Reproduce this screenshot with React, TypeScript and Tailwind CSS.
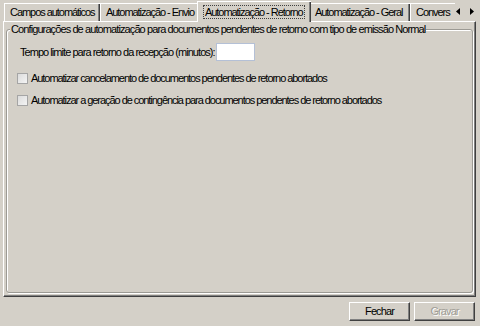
import React from "react";

function Tab({ label, selected, w }: { label: string; selected?: boolean; w: string }) {
  if (selected) {
    return (
      <div className={`relative z-10 -mx-[2px] -mb-px h-[21px] ${w} shrink-0 border-l border-t border-white shadow-[inset_-1px_0_0_#404040,inset_-2px_0_0_#808080] bg-[#d4d0c8] flex items-start pl-[5px] pt-[3px] whitespace-nowrap`}>
        <span className="border border-dotted border-[#404040] px-px h-[14px] leading-[12px]">{label}</span>
      </div>
    );
  }
  return (
    <div className={`h-[18px] ${w} shrink-0 border-l border-t border-white shadow-[inset_-1px_0_0_#404040,inset_-2px_0_0_#808080] flex items-start pl-[5px] pt-[2px] leading-[13px] overflow-hidden whitespace-nowrap`}>
      {label}
    </div>
  );
}

function Check({ label }: { label: string }) {
  return (
    <div className="flex items-center gap-[3px] h-[13px]">
      <div className="w-[11px] h-[11px] border border-[#a5a5a5] bg-gradient-to-br from-[#dcdcdc] to-[#f4f4f4]" />
      <span className="leading-[13px] tracking-[-1.05px]">{label}</span>
    </div>
  );
}

export default function App() {
  return (
    <div className="w-[480px] h-[326px] bg-[#d4d0c8] text-[11px] leading-[13px] tracking-[-1.05px] text-black font-['Liberation_Sans',Arial,sans-serif] overflow-hidden flex flex-col">
      <div className="relative h-[21px] flex items-end pl-[4px]">
        <Tab label="Campos automáticos" w="w-[96px]" />
        <Tab label="Automatização - Envio" w="w-[99px]" />
        <Tab label="Automatização - Retorno" selected w="w-[114px]" />
        <Tab label="Automatização - Geral" w="w-[101px]" />
        <div className="h-[18px] w-[45px] shrink-0 border-l border-t border-white flex items-start pl-[5px] pt-[2px] overflow-hidden whitespace-nowrap">
          Convers
        </div>
        <div className="h-[18px] flex items-center gap-[8px] pl-[1px] pb-[2px]">
          <svg width="5" height="7" viewBox="0 0 5 7"><path d="M4 0 L0 3.5 L4 7 Z" fill="#000" /></svg>
          <svg width="5" height="7" viewBox="0 0 5 7"><path d="M1 0 L5 3.5 L1 7 Z" fill="#000" /></svg>
        </div>
      </div>
      <div className="ml-[3px] w-[473px] h-[276px] border-l border-t border-white border-r border-b border-r-[#404040] border-b-[#404040] shadow-[inset_-1px_-1px_0_#808080] pl-[2px] pr-[2px] pt-[7px]">
        <div className="relative h-[264px] border border-[#9c9a94] rounded-[3px] shadow-[inset_1px_1px_0_#fff,1px_1px_0_#fff]">
          <div className="absolute -top-[7px] left-[3px] px-px bg-[#d4d0c8] whitespace-nowrap tracking-[-0.9px]">
            Configurações de automatização para documentos pendentes de retorno com tipo de emissão Normal
          </div>
          <div className="flex flex-col pl-[10px] pt-[13px]">
            <div className="flex items-center h-[18px]">
              <span className="pl-[3px] tracking-[-0.95px]">Tempo limite para retorno da recepção (minutos):</span>
              <div className="ml-px w-[39px] h-[18px] bg-white border border-[#b4c0d6]" />
            </div>
            <div className="mt-[11px]">
              <Check label="Automatizar cancelamento de documentos pendentes de retorno abortados" />
            </div>
            <div className="mt-[9px]">
              <Check label="Automatizar a geração de contingência para documentos pendentes de retorno abortados" />
            </div>
          </div>
        </div>
      </div>
      <div className="flex justify-end gap-[4px] pr-[5px] pt-[5px]">
        <button className="w-[61px] h-[19px] bg-[#d4d0c8] border-l border-t border-white border-r border-b border-r-[#404040] border-b-[#404040] shadow-[inset_-1px_-1px_0_#808080] text-black text-[11px] leading-[13px] tracking-[-0.9px] font-['Liberation_Sans',Arial,sans-serif]">
          Fechar
        </button>
        <button className="w-[61px] h-[19px] bg-[#d4d0c8] border-l border-t border-white border-r border-b border-r-[#404040] border-b-[#404040] shadow-[inset_-1px_-1px_0_#808080] text-[#a09d96] text-[11px] leading-[13px] tracking-[-0.9px] font-['Liberation_Sans',Arial,sans-serif] [text-shadow:1px_1px_0_#fff]">
          Gravar
        </button>
      </div>
    </div>
  );
}
